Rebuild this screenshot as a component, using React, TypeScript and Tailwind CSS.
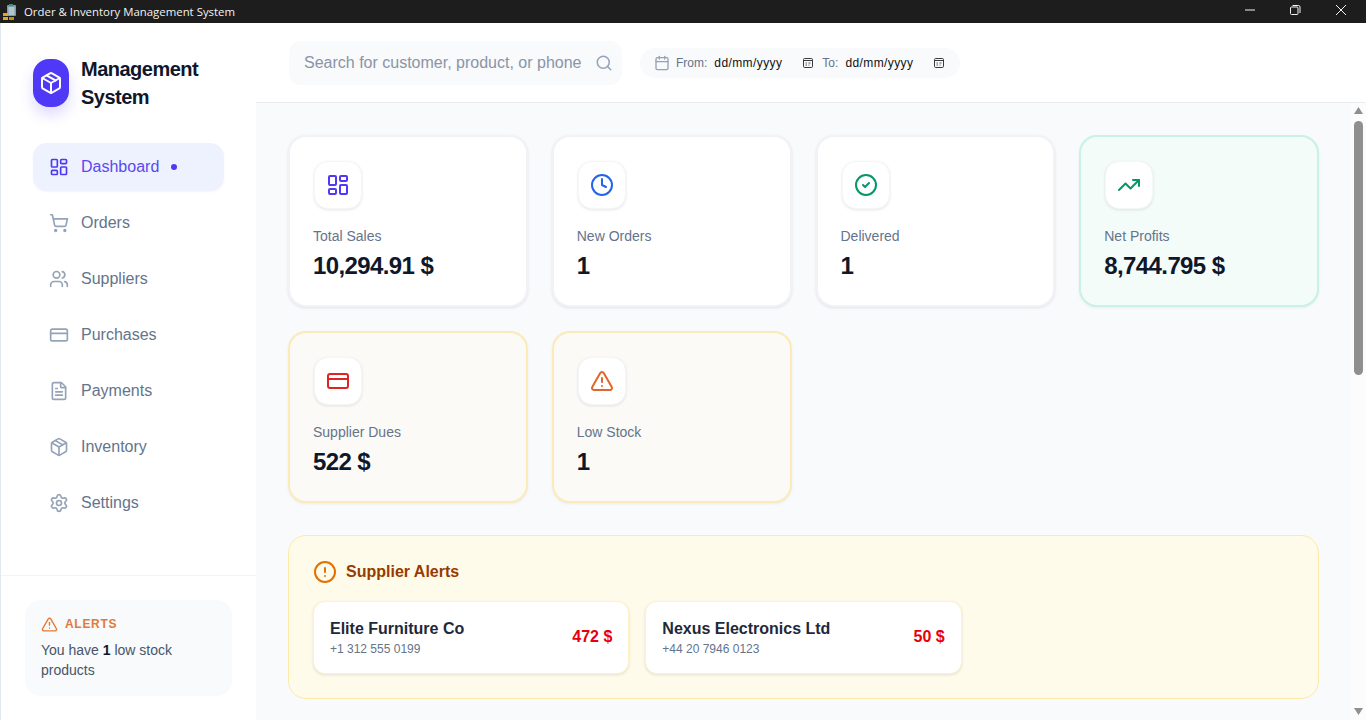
import React from "react";
import {
  LayoutDashboard, ShoppingCart, Users, CreditCard, FileText, Package, Settings,
  Clock, CircleCheck, TrendingUp, TriangleAlert, CircleAlert, Search, Calendar,
} from "lucide-react";

const nav = [
  { label: "Orders", Icon: ShoppingCart },
  { label: "Suppliers", Icon: Users },
  { label: "Purchases", Icon: CreditCard },
  { label: "Payments", Icon: FileText },
  { label: "Inventory", Icon: Package },
  { label: "Settings", Icon: Settings },
];

function PickerIcon() {
  return (
    <svg width="12" height="12" viewBox="0 0 12 12" fill="none" className="shrink-0">
      <rect x="1.5" y="1.5" width="9" height="9" rx="1.2" stroke="#3a3a3a" strokeWidth="1" />
      <path d="M2 3.5h8" stroke="#3a3a3a" strokeWidth="1" />
      <path d="M3.5 6h1.5M6.5 6h2M3.5 8h1.5M6.5 8h1" stroke="#555" strokeWidth="1" />
    </svg>
  );
}

function AppIcon() {
  return (
    <svg width="16" height="16" viewBox="0 0 16 16" className="shrink-0">
      <rect x="5" y="1" width="9" height="11" rx="1" fill="#7f9aa8" />
      <rect x="7" y="0" width="4" height="2" fill="#3f8f6f" />
      <path d="M6.5 4h6M6.5 6h6M6.5 8h6M6.5 10h6" stroke="#e6edf0" strokeWidth="1" />
      <rect x="1" y="9" width="5" height="3" fill="#e5a619" />
      <rect x="1" y="13" width="5" height="3" fill="#e5a619" />
      <rect x="7" y="13" width="5" height="3" fill="#c98a10" />
    </svg>
  );
}

function StatCard({ label, value, Icon, iconClass, cardClass }: {
  label: string; value: string; Icon: React.ElementType; iconClass: string; cardClass: string;
}) {
  return (
    <div className={`h-[172px] rounded-[18px] border-2 pl-[23px] pr-6 pt-6 ${cardClass}`}>
      <div className="ml-px flex h-12 w-12 items-center justify-center rounded-[14px] border border-[#f4f6f8] bg-white shadow-[0_1px_3px_rgba(15,23,42,0.1)]">
        <Icon size={24} className={iconClass} strokeWidth={2} />
      </div>
      <div className="mt-[17px] text-sm leading-5 text-[#64748b]">{label}</div>
      <div className="mt-1 text-2xl font-bold leading-8 tracking-tight text-[#0f172a]">{value}</div>
    </div>
  );
}

function SupplierCard({ name, phone, amount }: { name: string; phone: string; amount: string }) {
  return (
    <div className="flex h-[73px] items-center justify-between rounded-xl border border-[#fef3c7] bg-white px-4 shadow-[0_1px_3px_rgba(15,23,42,0.12)]">
      <div className="pt-px">
        <div className="text-base font-bold leading-5 text-[#1e293b]">{name}</div>
        <div className="mt-[2px] text-xs leading-4 text-[#64748b]">{phone}</div>
      </div>
      <div className="mb-px text-base font-bold text-[#e7000b]">{amount}</div>
    </div>
  );
}

export default function App() {
  return (
    <div className="flex h-screen w-full flex-col overflow-hidden bg-white font-['Liberation_Sans',Arial,sans-serif]">
      <div className="flex h-[23px] shrink-0 items-center bg-[#1d1d1d] pl-[2px] text-white">
        <AppIcon />
        <span className="ml-[6px] text-[11.4px] font-['Open_Sans',sans-serif] text-[#f2f2f2]">Order &amp; Inventory Management System</span>
        <div className="-mt-[3px] ml-auto flex items-center">
          <svg width="12" height="12" viewBox="0 0 12 12" className="mr-[33px]"><path d="M1 6h10" stroke="#f2f2f2" strokeWidth="1" /></svg>
          <svg width="12" height="12" viewBox="0 0 12 12" fill="none" className="mr-[34px]"><rect x="1.5" y="3" width="7.5" height="7.5" rx="1" stroke="#f2f2f2" /><path d="M3.5 1.5h6a1.5 1.5 0 0 1 1.5 1.5v6" stroke="#f2f2f2" /></svg>
          <svg width="12" height="12" viewBox="0 0 12 12" className="mr-[19px]"><path d="M1 1l10 10M11 1L1 11" stroke="#f2f2f2" strokeWidth="1" /></svg>
        </div>
      </div>
      <div className="flex min-h-0 flex-1">
        <aside className="flex w-[256px] shrink-0 flex-col border-l border-[#e2e8f0] bg-white">
          <div className="flex flex-1 flex-col pl-8 pr-8 pt-8">
            <div className="flex items-center gap-3">
              <div className="flex h-12 w-9 items-center justify-center rounded-2xl bg-[#4f39f6] shadow-[0_8px_14px_rgba(79,57,246,0.18)]">
                <Package size={24} className="text-white" />
              </div>
              <div className="text-xl font-bold leading-7 tracking-tight text-[#0f172a]">Management<br />System</div>
            </div>
            <nav className="mt-8 flex flex-col gap-2">
              <div className="flex h-12 items-center gap-3 rounded-[14px] bg-[#eef2ff] px-4 text-[#4f39f6] shadow-[0_1px_2px_rgba(79,57,246,0.06)]">
                <LayoutDashboard size={20} />
                <span className="text-base text-[#5c48f0]">Dashboard</span>
                <span className="h-1.5 w-1.5 rounded-full bg-[#4f39f6]" />
              </div>
              {nav.map(({ label, Icon }) => (
                <div key={label} className="flex h-12 items-center gap-3 rounded-xl px-4">
                  <Icon size={20} className="text-[#94a3b8]" />
                  <span className="text-base text-[#64748b]">{label}</span>
                </div>
              ))}
            </nav>
          </div>
          <div className="border-t border-[#f1f5f9] p-6">
            <div className="rounded-2xl bg-[#f8fafc] p-4">
              <div className="flex h-4 items-center gap-[7px] text-xs font-bold leading-4 tracking-[0.7px] text-[#e17a3a]">
                <TriangleAlert size={17} className="shrink-0 text-[#e17a3a]" />
                ALERTS
              </div>
              <div className="mt-2 text-sm leading-5 text-[#475569]">
                You have <span className="font-bold text-[#0f172a]">1</span> low stock products
              </div>
            </div>
          </div>
        </aside>
        <div className="flex min-w-0 flex-1 flex-col">
          <header className="flex h-[80px] shrink-0 items-center gap-[18px] border-b border-[#e8ecf1] bg-white pl-[33px]">
            <div className="flex h-[44px] w-[333px] items-center justify-between rounded-xl bg-[#f8fafc] pl-[15px] pr-[9px]">
              <span className="text-base text-[#8a94a6]">Search for customer, product, or phone</span>
              <Search size={18} className="text-[#94a3b8]" />
            </div>
            <div className="flex h-[30px] w-[320px] items-center rounded-full bg-[#f8fafc] pl-[14px] text-xs">
              <Calendar size={16} className="text-[#94a3b8]" />
              <span className="ml-[6px] text-[#64748b]">From:</span>
              <span className="ml-[7px] tracking-[0.4px] text-[#111]">dd/mm/yyyy</span>
              <span className="ml-[20px]"><PickerIcon /></span>
              <span className="ml-[8px] text-[#64748b]">To:</span>
              <span className="ml-[7px] tracking-[0.4px] text-[#111]">dd/mm/yyyy</span>
              <span className="ml-[20px]"><PickerIcon /></span>
            </div>
          </header>
          <div className="flex min-h-0 flex-1 bg-[#f8fafc]">
            <main className="min-w-0 flex-1 overflow-hidden px-8 pt-8">
              <div className="grid grid-cols-4 gap-6">
                <StatCard label="Total Sales" value="10,294.91 $" Icon={LayoutDashboard} iconClass="text-[#4f39f6]" cardClass="border-[#f1f3f6] bg-white shadow-[0_1px_3px_rgba(15,23,42,0.1)]" />
                <StatCard label="New Orders" value="1" Icon={Clock} iconClass="text-[#2563eb]" cardClass="border-[#f1f3f6] bg-white shadow-[0_1px_3px_rgba(15,23,42,0.1)]" />
                <StatCard label="Delivered" value="1" Icon={CircleCheck} iconClass="text-[#059669]" cardClass="border-[#f1f3f6] bg-white shadow-[0_1px_3px_rgba(15,23,42,0.1)]" />
                <StatCard label="Net Profits" value="8,744.795 $" Icon={TrendingUp} iconClass="text-[#059669]" cardClass="border-[#c8f2e3] bg-[#f4fcf9] shadow-[0_1px_3px_rgba(15,23,42,0.06)]" />
                <StatCard label="Supplier Dues" value="522 $" Icon={CreditCard} iconClass="text-[#dc2626]" cardClass="border-[#fcebb8] bg-[#fbfaf6] shadow-[0_1px_3px_rgba(15,23,42,0.06)]" />
                <StatCard label="Low Stock" value="1" Icon={TriangleAlert} iconClass="text-[#e0662a]" cardClass="border-[#fcebb8] bg-[#fbfaf6] shadow-[0_1px_3px_rgba(15,23,42,0.06)]" />
              </div>
              <section className="mt-8 h-[164px] rounded-[18px] border border-[#fde9a8] bg-[#fffbeb] pl-6 pr-6 pt-6">
                <div className="flex items-center gap-[9px] text-base font-bold leading-[22px] text-[#973c00]">
                  <CircleAlert size={24} className="text-[#e17100]" />
                  Supplier Alerts
                </div>
                <div className="mt-[17px] grid grid-cols-3 gap-4">
                  <SupplierCard name="Elite Furniture Co" phone="+1 312 555 0199" amount="472 $" />
                  <SupplierCard name="Nexus Electronics Ltd" phone="+44 20 7946 0123" amount="50 $" />
                </div>
              </section>
            </main>
            <div className="flex w-[15px] shrink-0 flex-col items-start bg-[#fcfcfd] pl-[3px]">
              <svg width="9" height="7" viewBox="0 0 9 7" className="mt-[4px]"><path d="M4.5 0L9 7H0z" fill="#8f8f8f" /></svg>
              <div className="mt-[7px] h-[254px] w-[9px] rounded-full bg-[#8f8f8f]" />
              <svg width="9" height="7" viewBox="0 0 9 7" className="mb-[5px] mt-auto"><path d="M0 0h9L4.5 7z" fill="#8f8f8f" /></svg>
            </div>
          </div>
        </div>
      </div>
    </div>
  );
}
